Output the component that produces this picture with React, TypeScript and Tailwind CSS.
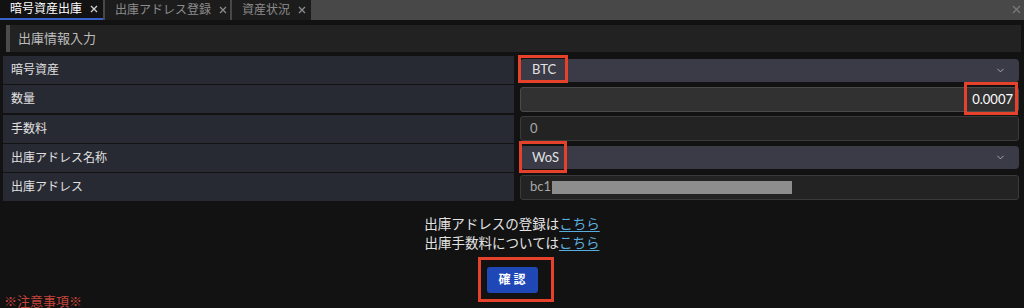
import React from 'react';
import { ChevronDown } from 'lucide-react';

const jp = { fontFamily: 'Lato, "Noto Sans CJK JP", sans-serif' };

const CloseMark = ({ color }: { color: string }) => (
  <svg width="8" height="8" viewBox="0 0 8 8" className="shrink-0">
    <path d="M1 1 L7 7 M7 1 L1 7" stroke={color} strokeWidth="1.3" />
  </svg>
);

const Tab = ({ label, active, width }: { label: string; active?: boolean; width: string }) => (
  <div
    className={`${width} h-[20px] flex items-center gap-[8px] pl-[10px] text-[12px] ${
      active ? 'bg-[#121212] text-white border-b-2 border-[#3a62cf]' : 'bg-[#1c1c1c] text-[#8c8c8c]'
    }`}
  >
    <span className="leading-none">{label}</span>
    <CloseMark color={active ? '#d0d0d0' : '#8c8c8c'} />
  </div>
);

const Select = ({ value }: { value: string }) => (
  <div className="h-[23px] w-full bg-[#3a3b47] rounded-[4px] flex items-center justify-between pl-[12px] pr-[13px]">
    <span className="text-[13px] text-[#e2e2e2]">{value}</span>
    <ChevronDown className="w-[11px] h-[11px] text-[#b0b0b0]" strokeWidth={2} />
  </div>
);

const App = () => {
  const rows = [
    { label: '暗号資産', field: <Select value="BTC" /> },
    {
      label: '数量',
      field: (
        <div className="h-[25px] w-full bg-[#313131] border border-[#4a4a4a] rounded-[3px] flex items-center justify-end pr-[5px]">
          <span className="text-[13px] text-white">0.0007</span>
        </div>
      ),
    },
    {
      label: '手数料',
      field: (
        <div className="h-[25px] w-full bg-[#232323] border border-[#3a3a3a] rounded-[3px] flex items-center pl-[9px]">
          <span className="text-[13px] text-[#a8a8a8]">0</span>
        </div>
      ),
    },
    { label: '出庫アドレス名称', field: <Select value="WoS" /> },
    {
      label: '出庫アドレス',
      field: (
        <div className="h-[25px] w-full bg-[#232323] border border-[#3a3a3a] rounded-[3px] flex items-center pl-[9px]">
          <span className="text-[13px] text-[#a8a8a8]">bc1</span>
          <div className="w-[240px] h-[13px] bg-[#8d8d8d] ml-[1px]" />
        </div>
      ),
    },
  ];

  const marks = [
    'left-[518px] top-[55px] w-[50px] h-[28px]',
    'left-[964px] top-[82px] w-[54px] h-[33px]',
    'left-[519px] top-[141px] w-[48px] h-[32px]',
    'left-[478px] top-[257px] w-[76px] h-[45px]',
  ];

  return (
    <div className="relative w-[1024px] h-[308px] overflow-hidden bg-[#121212]" style={jp}>
      {/* tab bar */}
      <div className="h-[20px] bg-[#484848] flex gap-[2px] relative">
        <Tab label="暗号資産出庫" active width="w-[103px]" />
        <Tab label="出庫アドレス登録" width="w-[125px]" />
        <Tab label="資産状況" width="w-[79px]" />
        <div className="absolute right-[3px] top-[5px]">
          <svg width="9" height="9" viewBox="0 0 9 9">
            <path d="M1 1 L8 8 M8 1 L1 8" stroke="#777" strokeWidth="1.3" />
          </svg>
        </div>
      </div>

      {/* section header */}
      <div className="ml-[6px] mr-[3px] mt-[5px] h-[27px] bg-[#222] border-l-4 border-[#4b4b4b] flex items-center pl-[8px]">
        <span className="text-[13px] text-[#bdbdbd]">出庫情報入力</span>
      </div>

      {/* form rows */}
      <div className="mx-[3px] mt-[4px] flex flex-col gap-[1.25px]">
        {rows.map((row, i) => (
          <div key={i} className="grid grid-cols-[511px_1fr] h-[28px]">
            <div className="bg-[#282a33] flex items-center pl-[8px] text-[12px] text-[#e0e0e0]">{row.label}</div>
            <div className="flex items-center pl-[6px] pr-[2px]">{row.field}</div>
          </div>
        ))}
      </div>

      {/* links */}
      <div className="mt-[14px] text-center text-[13.5px] leading-[19px] text-[#e4e4e4]">
        <p>
          出庫アドレスの登録は<span className="text-[#5aaedd] underline underline-offset-2">こちら</span>
        </p>
        <p>
          出庫手数料については<span className="text-[#5aaedd] underline underline-offset-2">こちら</span>
        </p>
      </div>

      <div className="flex justify-center mt-[14px]">
        <button className="w-[51px] h-[26px] bg-[#1f47b6] rounded-[3px] text-white text-[12px] font-bold tracking-[3px] pl-[3px]">
          確認
        </button>
      </div>

      <p className="pl-[4px] text-[13px] leading-[16px] text-[#c4443a]">※注意事項※</p>

      {/* red annotation frames */}
      {marks.map((m, i) => (
        <div key={i} className={`absolute ${m} border-[3px] border-[#e5412b] pointer-events-none`} />
      ))}
    </div>
  );
};

export default App;
